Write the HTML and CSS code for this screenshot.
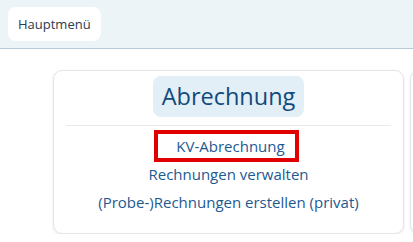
FILE: index.html
```html
<!DOCTYPE html>
<html lang="de">
<head>
<meta charset="utf-8">
<link rel="stylesheet" href="styles.css">
</head>
<body>
<header class="topbar">
  <button class="menu-btn">Hauptmenü</button>
</header>
<main class="cards">
  <section class="card">
    <div class="card-head"><h2 class="card-title">Abrechnung</h2></div>
    <hr class="divider">
    <nav class="links">
      <a class="link link-marked">KV-Abrechnung</a>
      <a class="link">Rechnungen verwalten</a>
      <a class="link">(Probe-)Rechnungen erstellen (privat)</a>
    </nav>
  </section>
  <section class="card"></section>
</main>
</body>
</html>
```
FILE: styles.css
```css
html, body {
  margin: 0;
  padding: 0;
  background: #ffffff;
  font-family: "Open Sans", Lato, sans-serif;
  overflow: hidden;
}
.topbar {
  height: 49px;
  background: #edf4f8;
  border-bottom: 1px solid #b7c9d6;
  display: flex;
  align-items: center;
  padding-left: 8px;
  box-sizing: border-box;
}
.menu-btn {
  height: 34px;
  margin-top: -1px;
  padding: 0 10px;
  border: none;
  border-radius: 8px;
  background: #ffffff;
  font-family: "Open Sans", Lato, sans-serif;
  font-size: 13px;
  color: #2b3b4e;
}
.cards {
  display: flex;
  gap: 6px;
  padding: 21px 0 0 53px;
  overflow: hidden;
}
.card {
  flex: 0 0 auto;
  width: 351px;
  height: 164px;
  box-sizing: border-box;
  border: 1px solid #e3e5e9;
  border-radius: 9px;
  box-shadow: 0 1px 3px rgba(0,0,0,0.08);
  background: #fff;
  display: flex;
  flex-direction: column;
}
.card-head {
  display: flex;
  justify-content: center;
  padding-top: 5px;
}
.card-title {
  margin: 0;
  height: 41px;
  line-height: 41px;
  padding: 0 9px;
  background: #e3eff6;
  border-radius: 8px;
  font-size: 23.5px;
  font-weight: 400;
  color: #114a7c;
}
.divider {
  margin: 8px 12px 0;
  border: none;
  border-top: 1px solid #e8eaec;
}
.links {
  display: flex;
  flex-direction: column;
  align-items: center;
  padding-top: 4px;
}
.link {
  font-size: 15px;
  color: #1d5a91;
  line-height: 28px;
}
.link-marked {
  border: 4px solid #e10000;
  padding: 0 10px 0 18px;
  margin-right: 4px;
  line-height: 24px;
  margin-bottom: -2px;
}
```
